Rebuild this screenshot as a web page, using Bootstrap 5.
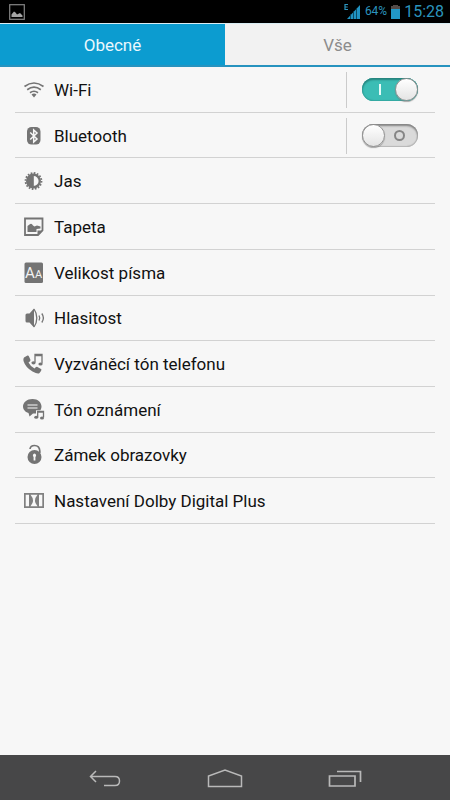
<!DOCTYPE html>
<html lang="cs">
<head>
<meta charset="utf-8">
<meta name="viewport" content="width=device-width, initial-scale=1">
<title>Nastavení</title>
<link href="https://cdn.jsdelivr.net/npm/bootstrap@5.3.0/dist/css/bootstrap.min.css" rel="stylesheet">
<style>
body{font-family:Roboto,"Noto Sans",sans-serif;background:#f7f7f7;color:#111}
.status{height:23px;background:#000;color:#2b94bd;padding:0 6px 0 9px}
.status-pct{font-size:12px;line-height:23px}
.status-clock{font-size:16px;line-height:24px}
.tabs{height:44px;border-top:1px solid #d9edf4;border-bottom:2px solid #2793bf}
.tabs .nav-link{border-radius:0;padding:0;font-size:17px;line-height:43px;color:#8c8c8c;background:#f2f2f2}
.tabs .nav-link.active{background:#0c9cd0;color:#e9f8fd}
.settings{display:grid;grid-auto-rows:1fr;min-height:457px;margin:0 15px}
.setting{border:0;border-bottom:1px solid #d2d2d2;border-radius:0;background:none;color:#111;padding:1px 0 0 7px;font-size:17px;line-height:24px;text-align:left}
.setting svg{width:24px;height:24px;flex:none;color:#747474}
.switch-cell{border-left:1px solid #cbcbcb;height:36px;width:89px;padding-left:15px}
.toggle{appearance:none;display:block;position:relative;width:56px;height:23px;margin:0;border-radius:12px;background:#dadada;box-shadow:inset 0 2px 2px #858585,inset 0 0 1px 1px #b5b5b5;cursor:pointer}
.toggle:checked{background:#3bbdb5;box-shadow:inset 0 2px 2px #27847e,inset 0 0 1px 1px #35a8a1}
.toggle::before{content:"";position:absolute;left:0;top:0;width:23px;height:23px;border-radius:50%;background:linear-gradient(#fff,#e4e4e4);border:1px solid #929292;box-shadow:0 1px 1px #77777799}
.toggle:checked::before{left:auto;right:0}
.toggle::after{content:"";position:absolute;left:32px;top:6px;width:11px;height:11px;border:2px solid #858585;border-radius:50%}
.toggle:checked::after{left:17px;width:2px;border:0;border-radius:0;background:#e5faf8}
.keys{height:45px;background:#474748;padding:0 45px}
.keys .btn{border:0;border-radius:0;padding:0;color:#b9b9b9}
</style>
<script src="https://cdn.jsdelivr.net/npm/bootstrap@5.3.0/dist/js/bootstrap.bundle.min.js"></script>
</head>
<body class="d-flex flex-column min-vh-100">
<header>
  <div class="status d-flex align-items-center justify-content-between">
    <svg width="16" height="16" viewBox="0 0 16 16" aria-hidden="true"><rect x=".7" y=".7" width="14.6" height="14.6" fill="none" stroke="#858585" stroke-width="1.2"/><path d="M2.5 13V10.500L5 7.500L6.500 8.500L8 10.500L11 9L13.500 11.500V13Z" fill="#a5a5a5"/></svg>
    <div class="d-flex align-items-center">
      <svg width="17" height="17" viewBox="0 0 17 17" aria-hidden="true"><path d="M4 1.500H1V6.500H4M1 4H3.700" fill="none" stroke="#2b94bd" stroke-width="1.200"/><path d="M3 16L16 2V16Z" fill="#2093c2"/><path d="M6.500 11V16M9.500 8V16M12.500 5V16" stroke="#07384b" stroke-width=".8"/></svg>
      <span class="status-pct ms-1">64%</span>
      <svg class="ms-1" width="9" height="14" viewBox="0 0 9 14" aria-hidden="true"><path d="M2 0H7V1H9V5H0V1H2Z" fill="#544b48"/><path d="M0 4H9V14H0Z" fill="#2198c8"/></svg>
      <time class="status-clock ms-1">15:28</time>
    </div>
  </div>
  <nav class="tabs nav nav-pills nav-fill flex-nowrap">
    <a class="nav-link active w-50" href="#list" aria-current="page">Obecné</a>
    <a class="nav-link w-50" href="#all">Vše</a>
  </nav>
</header>
<main class="flex-grow-1">
  <div class="settings" id="list">
    <div class="setting d-flex align-items-center gap-2">
      <svg viewBox="0 0 24 24" fill="none" stroke="currentColor" stroke-width="1.700" aria-hidden="true"><path d="M2.500 8.500Q12 1.500 21.500 8.500M5.200 11.700Q12 6.700 18.800 11.700M8 14.700Q12 11.800 16 14.700"/><path d="M9.500 16.500Q12 14.500 14.500 16.500L12 19.500Z" fill="currentColor" stroke="none"/></svg>
      <label class="flex-grow-1" for="wifi">Wi-Fi</label>
      <div class="switch-cell d-flex align-items-center"><input class="toggle" type="checkbox" role="switch" id="wifi" checked></div>
    </div>
    <div class="setting d-flex align-items-center gap-2">
      <svg viewBox="0 0 24 24" aria-hidden="true"><rect x="5" y="3" width="13.500" height="17.500" rx="4.500" fill="currentColor"/><path d="M8.200 8.500L15 15L11.700 18V6L15 9L8.200 15.500" fill="none" stroke="#f7f7f7" stroke-width="1.500"/></svg>
      <label class="flex-grow-1" for="bluetooth">Bluetooth</label>
      <div class="switch-cell d-flex align-items-center"><input class="toggle" type="checkbox" role="switch" id="bluetooth"></div>
    </div>
    <button type="button" class="setting d-flex align-items-center gap-2">
      <svg viewBox="0 0 24 24" aria-hidden="true"><circle cx="11.500" cy="12" r="8" fill="none" stroke="currentColor" stroke-width="1.800" stroke-dasharray="1.700 1.442"/><circle cx="11.500" cy="12" r="6.300" fill="none" stroke="currentColor" stroke-width="2.400"/><path d="M11.800 5A7 7 0 0 0 11.800 19Z" fill="currentColor"/></svg>
      <span>Jas</span></button>
    <button type="button" class="setting d-flex align-items-center gap-2">
      <svg viewBox="0 0 24 24" aria-hidden="true"><path d="M3 3.500H20.500V15.500L16 20H3Z" fill="none" stroke="currentColor" stroke-width="1.800"/><path d="M5.500 17V11L7.500 9.500Q9.500 7.500 11 10.500L12.500 11.500L15 10.500L18.500 11.500V13.500L14.500 14V17Z M15.500 20V15.500H20.500Z" fill="currentColor"/></svg>
      <span>Tapeta</span></button>
    <button type="button" class="setting d-flex align-items-center gap-2">
      <svg viewBox="0 0 24 24" aria-hidden="true"><rect x="2.500" y="1.500" width="18.500" height="20.500" rx="1.500" fill="currentColor"/><g fill="#f2f2f2" font-family="Roboto,sans-serif"><text x="3" y="17" font-size="15">A</text><text x="13" y="17" font-size="11">A</text></g></svg>
      <span>Velikost písma</span></button>
    <button type="button" class="setting d-flex align-items-center gap-2">
      <svg viewBox="0 0 24 24" aria-hidden="true"><path d="M3.500 9Q3.500 7.500 5 7.500H7.500L12 2.500V21.500L7.500 16.500H5Q3.500 16.500 3.500 15Z" fill="currentColor"/><path d="M12 3Q14.800 7 14.800 12Q14.800 17 12 21M17 9.500Q18.500 12 17 14.500M19.800 7.500Q23 12 19.800 16.500" fill="none" stroke="currentColor" stroke-width="1.300"/></svg>
      <span>Hlasitost</span></button>
    <button type="button" class="setting d-flex align-items-center gap-2">
      <svg viewBox="0 0 24 24" aria-hidden="true"><path d="M2 5.500L5.500 3.500Q6.500 3.200 7 4.500L8.500 8Q8.700 9 6.500 10.500Q8.500 14.500 12.500 16.500Q14 14.500 15 14.800L19 17Q20 17.500 19 19L17.500 21Q16 22.500 10.500 19.500Q3.500 15.500 1.500 9Q1 6.500 2 5.500Z" fill="currentColor"/><path d="M13 10.500V2.500H20V11.500M13 3.500H20" fill="none" stroke="currentColor" stroke-width="1.300"/><ellipse cx="11.500" cy="10.800" rx="2.100" ry="1.600" fill="currentColor"/><ellipse cx="18.500" cy="12" rx="2.100" ry="1.600" fill="currentColor"/></svg>
      <span>Vyzváněcí tón telefonu</span></button>
    <button type="button" class="setting d-flex align-items-center gap-2">
      <svg viewBox="0 0 24 24" aria-hidden="true"><path d="M10.500 1C16 1 19.500 4.500 19.500 8.500C19.500 10 19 11.200 18.300 12.200H14V15.500H11L7.500 18.500L6.500 15C3 14 1 11 1 8.500C1 4.500 5 1 10.500 1Z" fill="currentColor"/><path d="M5.500 7H15.500M5.500 10H15.500" stroke="#f7f7f7" stroke-width="1.200"/><path d="M15.700 19V13.500H21.500V19.500M15.700 14H21.500" fill="none" stroke="currentColor" stroke-width="1.300"/><ellipse cx="14.200" cy="19.300" rx="2" ry="1.500" fill="currentColor"/><ellipse cx="20" cy="20" rx="2" ry="1.500" fill="currentColor"/></svg>
      <span>Tón oznámení</span></button>
    <button type="button" class="setting d-flex align-items-center gap-2">
      <svg viewBox="0 0 24 24" aria-hidden="true"><circle cx="12.500" cy="14" r="7" fill="currentColor"/><path d="M8 6Q8.500 2.500 12.500 2.500Q17.500 2.500 17.800 8V10" fill="none" stroke="currentColor" stroke-width="1.700"/><path d="M12.500 10.500A2 2 0 0 0 11.600 14V17.500H13.400V14A2 2 0 0 0 12.500 10.500Z" fill="#f7f7f7"/></svg>
      <span>Zámek obrazovky</span></button>
    <button type="button" class="setting d-flex align-items-center gap-2">
      <svg viewBox="0 0 24 24" aria-hidden="true"><path fill-rule="evenodd" d="M2 4H22V19H2ZM3.700 5.700V17.300H7V5.700ZM17 5.700V17.300H20.300V5.700ZM8.500 5.700Q13.500 11.500 8.500 17.300H15.500Q10.500 11.500 15.500 5.700Z" fill="#808080"/></svg>
      <span>Nastavení Dolby Digital Plus</span></button>
  </div>
</main>
<footer class="keys d-flex">
    <button type="button" class="btn col" aria-label="Zpět"><svg width="32" height="20" viewBox="0 0 32 20" fill="none" stroke="currentColor" stroke-width="1.500"><path d="M7 3L1.500 8.500L7 14M1.500 8.500H26Q30.500 8.500 30.500 13T26 17.500H15"/></svg></button>
    <button type="button" class="btn col" aria-label="Domů"><svg width="36" height="20" viewBox="0 0 36 20" fill="none" stroke="currentColor" stroke-width="1.500"><path d="M1.500 18.500V8L18 2L34.500 8V18.500Z"/></svg></button>
    <button type="button" class="btn col" aria-label="Poslední aplikace"><svg width="34" height="20" viewBox="0 0 34 20" fill="none" stroke="currentColor" stroke-width="1.700"><path d="M1.500 8H27V18H1.500ZM9 3.500H32.500V14"/></svg></button>
</footer>
</body>
</html>
